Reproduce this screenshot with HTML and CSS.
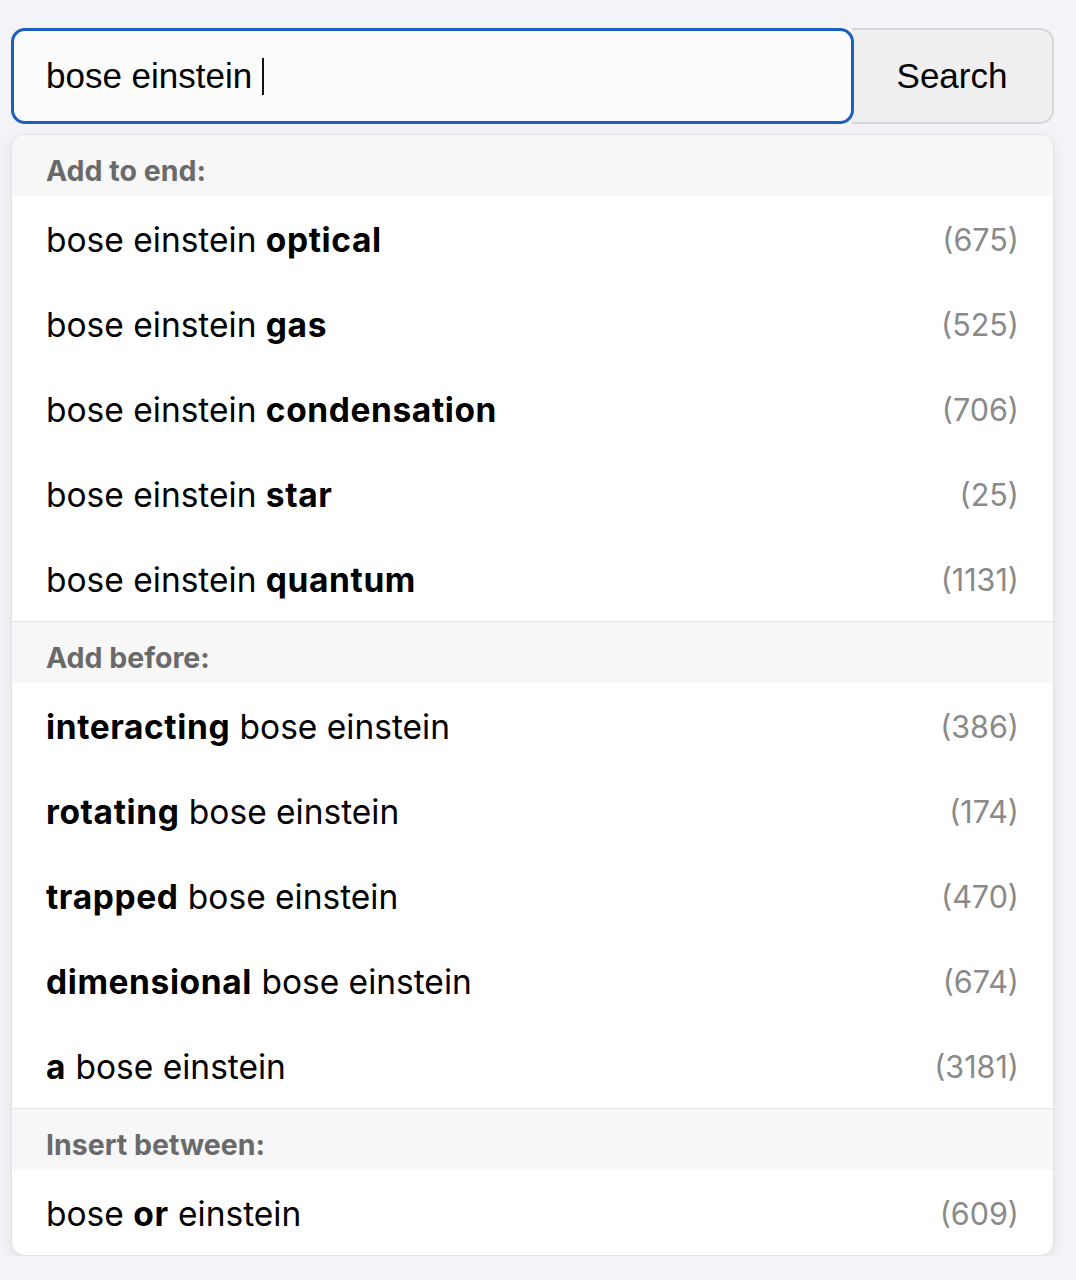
FILE: index.html
```html
<!DOCTYPE html>
<html lang="en">
<head>
<meta charset="utf-8">
<title>Search suggestions</title>
<link rel="stylesheet" href="styles.css">
</head>
<body>
<div class="wrap">
  <form class="search">
    <div class="field"><span class="value">bose einstein</span><span class="caret"></span></div>
    <button type="button" class="btn">Search</button>
  </form>
  <div class="dropdown">
    <div class="group">
      <div class="head">Add to end:</div>
      <div class="item"><span class="q">bose einstein <b>optical</b></span><span class="n">(675)</span></div>
      <div class="item"><span class="q">bose einstein <b>gas</b></span><span class="n">(525)</span></div>
      <div class="item"><span class="q">bose einstein <b>condensation</b></span><span class="n">(706)</span></div>
      <div class="item"><span class="q">bose einstein <b>star</b></span><span class="n">(25)</span></div>
      <div class="item"><span class="q">bose einstein <b>quantum</b></span><span class="n">(1131)</span></div>
    </div>
    <div class="group">
      <div class="head">Add before:</div>
      <div class="item"><span class="q"><b>interacting</b> bose einstein</span><span class="n">(386)</span></div>
      <div class="item"><span class="q"><b>rotating</b> bose einstein</span><span class="n">(174)</span></div>
      <div class="item"><span class="q"><b>trapped</b> bose einstein</span><span class="n">(470)</span></div>
      <div class="item"><span class="q"><b>dimensional</b> bose einstein</span><span class="n">(674)</span></div>
      <div class="item"><span class="q"><b>a</b> bose einstein</span><span class="n">(3181)</span></div>
    </div>
    <div class="group">
      <div class="head">Insert between:</div>
      <div class="item"><span class="q">bose <b>or</b> einstein</span><span class="n">(609)</span></div>
    </div>
  </div>
</div>
</body>
</html>
```

FILE: styles.css
```css
html, body {
  margin: 0;
  padding: 0;
  background: #f3f3f8;
}
body {
  font-family: Inter, "Liberation Sans", Arial, sans-serif;
  color: #000;
}
.wrap {
  padding: 28px 22px 0 11px;
}
.search {
  display: flex;
  margin: 0;
  height: 96px;
}
.field {
  flex: 1;
  display: flex;
  align-items: center;
  box-sizing: border-box;
  border: 3px solid #1b5fbf;
  border-radius: 14px;
  background: #fcfcfc;
  padding-left: 32px;
  font-family: "Liberation Sans", Arial, sans-serif;
  font-size: 35px;
  position: relative;
  z-index: 1;
}
.caret {
  display: inline-block;
  width: 2px;
  height: 37px;
  background: #111;
  margin-left: 10px;
}
.btn {
  width: 202px;
  margin-left: -2px;
  box-sizing: border-box;
  border: 2px solid #d6d6d8;
  border-left: none;
  border-radius: 0 14px 14px 0;
  background: #efeff0;
  font-family: "Liberation Sans", Arial, sans-serif;
  font-size: 35px;
  color: #000;
  padding: 0;
}
.dropdown {
  margin-top: 10px;
  background: #fff;
  border: 1px solid #e2e2e6;
  border-radius: 14px;
  overflow: hidden;
  box-shadow: 0 4px 14px rgba(0, 0, 0, 0.08);
}
.group + .group {
  border-top: 1px solid #e6e6e8;
}
.head {
  height: 61px;
  box-sizing: border-box;
  padding: 10px 34px 0;
  background: #f7f7f7;
  color: #6a6a6a;
  font-weight: 700;
  font-size: 28.5px;
  display: flex;
  align-items: center;
}
.item {
  height: 85px;
  display: flex;
  align-items: center;
  justify-content: space-between;
  padding: 2px 34px 0 34px;
  box-sizing: border-box;
  font-size: 33.5px;
}
.item b {
  font-weight: 700;
  letter-spacing: 0.6px;
}
.n {
  color: #8a8a8a;
  font-size: 30.5px;
}
```
